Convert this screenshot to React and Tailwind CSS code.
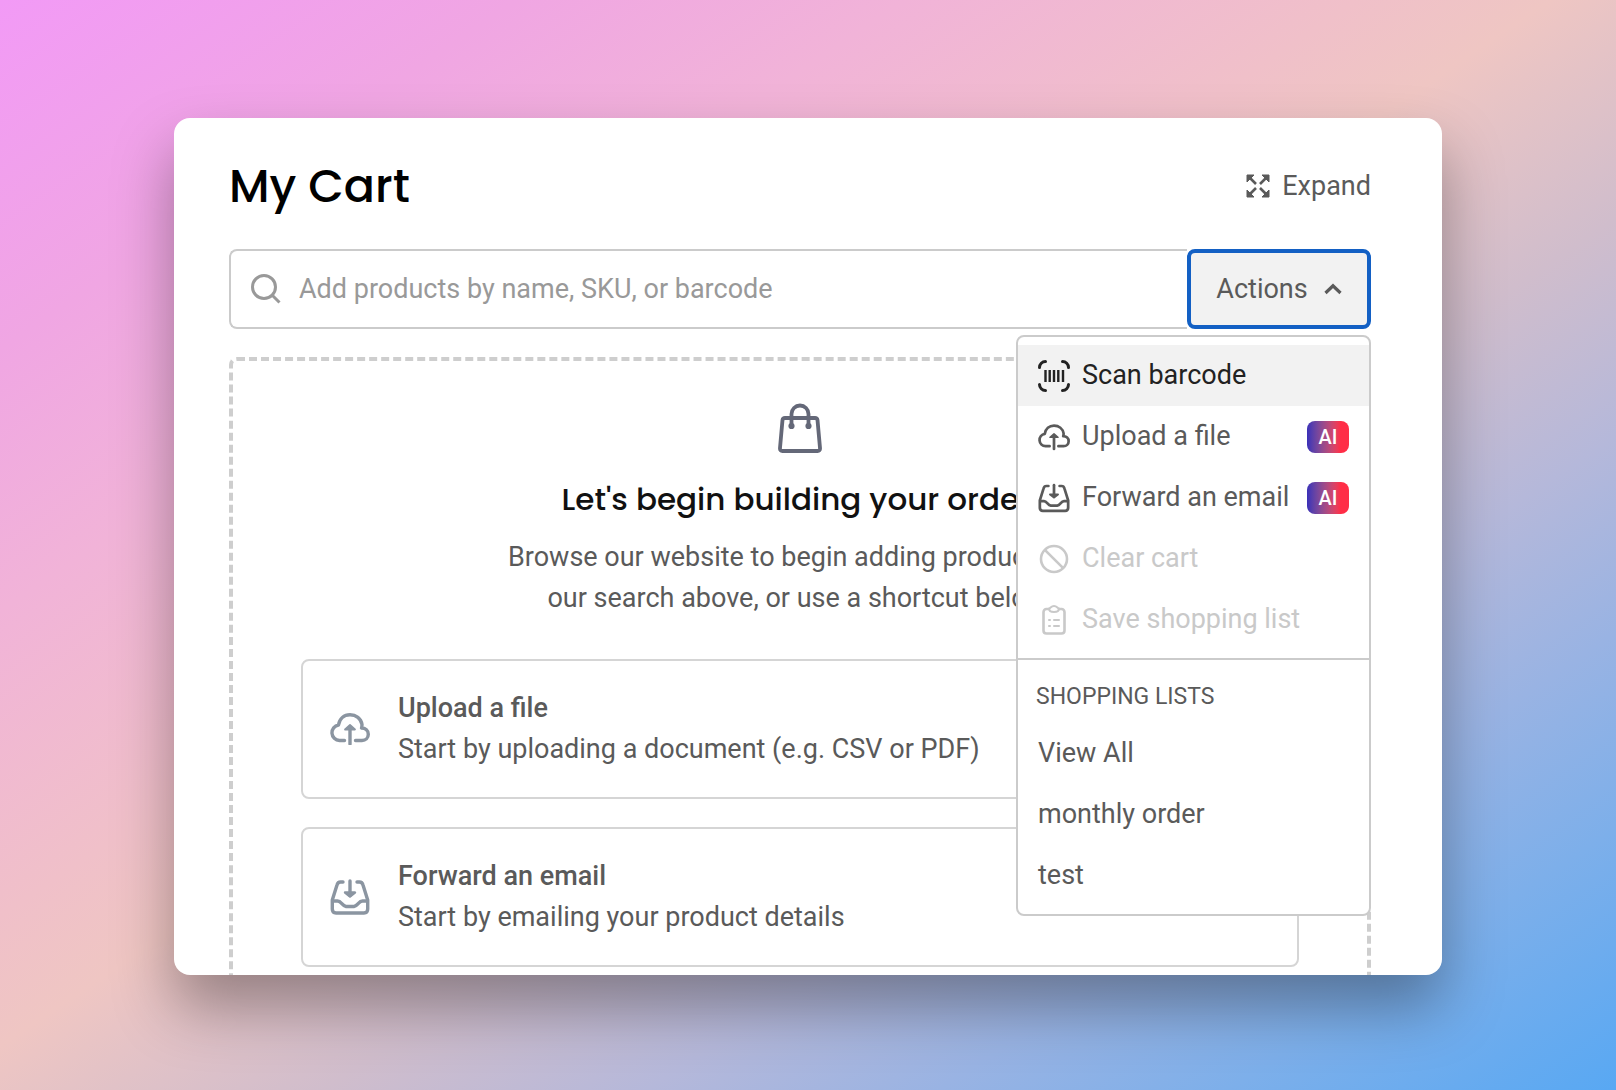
import React, { useState } from 'react'

const CloudUploadIcon = ({ className }) => (
  <svg viewBox="0 0 40 32" fill="none" stroke="currentColor" strokeWidth="3.4" strokeLinecap="round" strokeLinejoin="round" className={className}>
    <path d="M14.500 27.500H9.500A7.800 7.800 0 0 1 8.500 12C9.500 5.800 14 1.800 20 1.800S31 5.500 32 11.500C32 13 32 14 31.500 15 35.500 15 38.300 17.500 38.300 21.300S35.500 27.500 32 27.500H25.500" />
    <path d="M20 31V14" />
    <path d="M15 16.500 20 12l5 4.500z" fill="currentColor" strokeWidth="1.800" />
  </svg>
)

const InboxIcon = ({ className }) => (
  <svg viewBox="0 0 40 36" fill="none" stroke="currentColor" strokeWidth="3.4" strokeLinecap="round" strokeLinejoin="round" className={className}>
    <path d="M13 3H10.500C8.500 3 7.500 4 7 6L2.300 21V30C2.300 32.700 3.800 34 6 34H34c2.200 0 3.700-1.300 3.700-4V21L33 6C32.500 4 31.500 3 29.500 3H27" />
    <path d="M3 22H7.500C11.500 22 12 27 16 27.500h8C28 27 28.500 22 32.500 22H37" />
    <path d="M20 2V16.500" />
    <path d="M15 13.500 20 17.500l5-4z" fill="currentColor" strokeWidth="2.400" />
  </svg>
)

const BarcodeIcon = ({ className }) => (
  <svg viewBox="0 0 32 32" fill="none" stroke="currentColor" strokeWidth="3" strokeLinecap="round" className={className}>
    <path d="M1.500 7.500A6 6 0 0 1 7.500 1.500M24.500 1.500A6 6 0 0 1 30.500 7.500M30.500 24.500A6 6 0 0 1 24.500 30.500M7.500 30.500A6 6 0 0 1 1.500 24.500" />
    <path d="M7.500 10V22M11.700 10V22M16 10V22M20.300 10V22M25 10V22" strokeWidth="2.400" strokeLinecap="butt" />
  </svg>
)

const ForbidIcon = ({ className }) => (
  <svg viewBox="0 0 32 32" fill="none" stroke="currentColor" strokeWidth="2.6" className={className}>
    <circle cx="16" cy="16" r="13" />
    <path d="M6.800 6.800 25.200 25.200" />
  </svg>
)

const ClipboardIcon = ({ className }) => (
  <svg viewBox="0 0 32 32" fill="none" stroke="currentColor" strokeWidth="2.6" strokeLinecap="round" strokeLinejoin="round" className={className}>
    <path d="M11 5H8.500C6.800 5 5.500 6.300 5.500 8V26.500C5.500 28.200 6.800 29.500 8.500 29.500H23.500c1.700 0 3-1.300 3-3V8C26.500 6.300 25.200 5 23.500 5H21" />
    <path d="M11 4.500C12.500 4.500 13 2 16 2s3.500 2.500 5 2.500C21 6.500 19 8 16 8S11 6.500 11 4.500z" strokeWidth="2" />
    <path d="M11 16h1M16 16h5M11 22h1M16 22h5" strokeWidth="2" />
  </svg>
)

const BagIcon = ({ className }) => (
  <svg viewBox="0 0 44 50" fill="none" stroke="currentColor" strokeWidth="3.8" strokeLinecap="round" strokeLinejoin="round" className={className}>
    <path d="M7 15H37C38.500 15 39.300 15.800 39.500 17L42 45C42.200 47 41.200 48 39.500 48H4.500C2.800 48 1.800 47 2 45L4.500 17C4.700 15.800 5.500 15 7 15z" />
    <path d="M13.500 23.500V11A8.500 8.500 0 0 1 30.500 11V23.500" />
    <circle cx="13.500" cy="23" r="1.200" fill="currentColor" />
    <circle cx="30.500" cy="23" r="1.200" fill="currentColor" />
  </svg>
)

const ExpandIcon = ({ className }) => (
  <svg viewBox="0 0 24 24" fill="currentColor" stroke="currentColor" strokeWidth="2.6" className={className}>
    <path d="M3 3 10 10M21 3 14 10M3 21 10 14M21 21 14 14" fill="none" />
    <path d="M1 1H8L1 8zM23 1V8L16 1zM1 23V16L8 23zM23 23H16L23 16z" strokeWidth="1" strokeLinejoin="round" />
  </svg>
)

const SearchIcon = ({ className }) => (
  <svg viewBox="0 0 30 30" fill="none" stroke="currentColor" strokeWidth="3" className={className}>
    <circle cx="13" cy="13" r="11.500" />
    <path d="M21 21 28.500 28.500" />
  </svg>
)

const ChevronUpIcon = ({ className }) => (
  <svg viewBox="0 0 18 12" fill="none" stroke="currentColor" strokeWidth="3.2" className={className}>
    <path d="M1.500 10 9 2.800 16.500 10" />
  </svg>
)

const menuItems = [
  { name: 'Scan barcode', icon: BarcodeIcon, active: true },
  { name: 'Upload a file', icon: CloudUploadIcon, ai: true },
  { name: 'Forward an email', icon: InboxIcon, ai: true },
  { name: 'Clear cart', icon: ForbidIcon, disabled: true },
  { name: 'Save shopping list', icon: ClipboardIcon, disabled: true },
]

const shoppingLists = ['View All', 'monthly order', 'test']

const shortcuts = [
  { title: 'Upload a file', text: 'Start by uploading a document (e.g. CSV or PDF)', icon: CloudUploadIcon },
  { title: 'Forward an email', text: 'Start by emailing your product details', icon: InboxIcon },
]

function ActionsMenu() {
  return (
    <div className="absolute right-0 top-full z-10 mt-[6px] w-[355px] rounded-lg border-2 border-[#cbcbcb] bg-white">
      <ul className="py-2">
        {menuItems.map((item) => {
          const Icon = item.icon
          return (
            <li key={item.name}>
              <button
                type="button"
                disabled={item.disabled}
                className={`flex h-[61px] w-full items-center gap-3 px-5 text-left ${
                  item.active ? 'bg-[#f2f2f2] text-[#222]' : item.disabled ? 'text-[#c9c9c9]' : 'text-[#5a5a5a]'
                }`}
              >
                <Icon className="size-8 shrink-0" />
                <span className="flex-1 whitespace-nowrap">{item.name}</span>
                {item.ai && (
                  <span className="flex h-8 w-[42px] items-center justify-center rounded-lg bg-linear-to-r from-[#3a2fb8] to-[#ff2d46] to-80% text-xl font-medium text-white">
                    AI
                  </span>
                )}
              </button>
            </li>
          )
        })}
      </ul>
      <div className="border-t-2 border-[#cbcbcb] pt-[19px] pb-2">
        <h3 className="px-[18px] pb-2 text-[23px] leading-9">SHOPPING LISTS</h3>
        <ul>
          {shoppingLists.map((list) => (
            <li key={list}>
              <a href="#" className="flex h-[61px] items-center px-5">{list}</a>
            </li>
          ))}
        </ul>
      </div>
    </div>
  )
}

export default function App() {
  const [query, setQuery] = useState('')
  const [menuOpen, setMenuOpen] = useState(true)

  return (
    <main className="flex h-screen flex-col bg-[linear-gradient(to_bottom_right,#f29af6_0%,#f0a6e3_16%,#f1b3d8_28%,#f0c0c9_42%,#efc6c3_48%,#d0bdcc_60%,#b5b8da_70%,#99b3e3_79%,#7dafea_88%,#58a8f3_100%)] px-[174px] pt-[118px] pb-[115px] font-['Roboto',sans-serif] text-[27px] leading-[41px] text-[#5a5a5a]">
      <section className="min-h-0 flex-1 overflow-hidden rounded-2xl bg-white pt-10 pr-[71px] pl-[55px] shadow-[0_32px_60px_rgba(0,0,0,0.34)]">
        <header className="flex items-center justify-between">
          <h1 className="font-['Poppins','Inter',sans-serif] text-[46px] leading-[56px] font-medium text-black">My Cart</h1>
          <button type="button" className="flex items-center gap-3">
            <ExpandIcon className="size-6" />
            Expand
          </button>
        </header>

        <div className="relative mt-[35px] flex h-20">
          <label className="flex flex-1 items-center gap-[18px] rounded-l-lg border-2 border-r-0 border-[#cbcbcb] pl-5 text-[#999]">
            <SearchIcon className="size-[30px]" />
            <input
              type="text"
              aria-label="Add products"
              placeholder="Add products by name, SKU, or barcode"
              value={query}
              onChange={(e) => setQuery(e.target.value)}
              className="min-w-0 flex-1 outline-none placeholder:text-[#999]"
            />
          </label>
          <button
            type="button"
            onClick={() => setMenuOpen(!menuOpen)}
            className="flex w-[184px] items-center justify-center gap-4 rounded-lg border-4 border-[#1360c4] bg-[#f2f2f2]"
          >
            Actions
            <ChevronUpIcon className="w-[18px]" />
          </button>
          {menuOpen && <ActionsMenu />}
        </div>

        <div className="mt-7 flex flex-col items-center rounded-lg border-4 border-dashed border-[#cecece] px-[68px] pt-[42px] pb-12">
          <BagIcon className="h-[50px] w-11 text-[#646878]" />
          <h2 className="mt-6 font-['Poppins','Inter',sans-serif] text-[31px] leading-[44px] font-medium text-[#111]">
            Let's begin building your order.
          </h2>
          <p className="mt-4 text-center">
            Browse our website to begin adding products, try
            <br />
            our search above, or use a shortcut below.
          </p>
          <div className="mt-10 flex w-full flex-col gap-7">
            {shortcuts.map((item) => {
              const Icon = item.icon
              return (
                <button key={item.title} type="button" className="flex h-[140px] items-center gap-7 rounded-lg border-2 border-[#d5d5d5] px-[27px] text-left">
                  <Icon className="w-10 text-[#8b95a1]" />
                  <span>
                    <span className="block font-medium">{item.title}</span>
                    <span className="block">{item.text}</span>
                  </span>
                </button>
              )
            })}
          </div>
        </div>
      </section>
    </main>
  )
}
